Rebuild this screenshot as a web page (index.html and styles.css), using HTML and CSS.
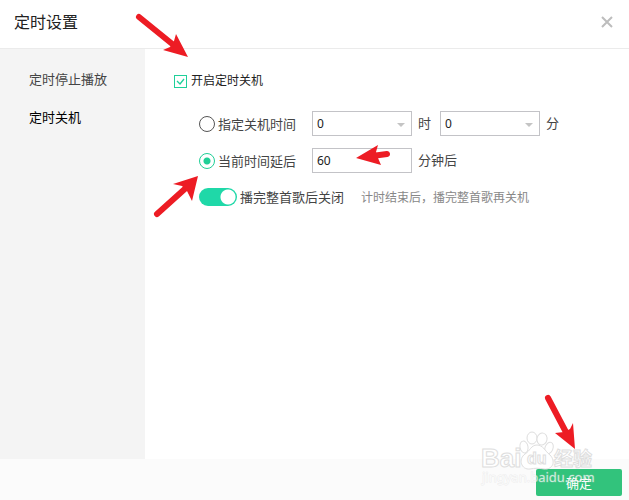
FILE: index.html
```html
<!DOCTYPE html>
<html lang="zh-CN">
<head>
<meta charset="utf-8">
<title>定时设置</title>
<link rel="stylesheet" href="styles.css">
</head>
<body>
<div class="dialog">
  <header class="header">
    <h1 class="title">定时设置</h1>
    <button class="close" type="button" aria-label="关闭">
      <svg width="14" height="14" viewBox="0 0 14 14"><path d="M2 2L12 12M12 2L2 12" stroke="#bdbdbd" stroke-width="2"/></svg>
    </button>
  </header>
  <div class="body">
    <nav class="sidebar">
      <a class="nav-link" href="#stop">定时停止播放</a>
      <a class="nav-link active" href="#shutdown">定时关机</a>
    </nav>
    <main class="panel">
      <label class="enable"><input class="check" type="checkbox" checked>开启定时关机</label>
      <div class="options">
        <div class="row">
          <label class="choice"><input class="radio" type="radio" name="mode">指定关机时间</label>
          <select class="field select" id="hour"><option>0</option></select>
          <label class="unit" for="hour">时</label>
          <select class="field select next" id="minute"><option>0</option></select>
          <label class="unit" for="minute">分</label>
        </div>
        <div class="row">
          <label class="choice"><input class="radio" type="radio" name="mode" checked>当前时间延后</label>
          <input class="field" id="delay" type="text" value="60">
          <label class="unit" for="delay">分钟后</label>
        </div>
        <div class="row">
          <label class="toggle"><input class="switch" type="checkbox" role="switch" checked>播完整首歌后关闭</label>
          <span class="hint">计时结束后，播完整首歌再关机</span>
        </div>
      </div>
    </main>
  </div>
  <footer class="footer">
    <button class="confirm" type="button">确定</button>
    <svg class="watermark" width="120" height="60" viewBox="480 430 120 60" aria-hidden="true">
      <g class="mark">
        <text class="brand" x="481" y="467">Bai</text>
        <ellipse cx="524" cy="447" rx="4" ry="6" transform="rotate(-12 524 447)"/>
        <ellipse cx="532" cy="438" rx="5" ry="6"/>
        <ellipse cx="542" cy="439" rx="5" ry="6" transform="rotate(12 542 439)"/>
        <ellipse cx="549" cy="448" rx="4" ry="6" transform="rotate(20 549 448)"/>
        <path d="M537 445C531 445 530 451 525 454C518 459 521 470 530 469C535 468 539 468 544 469C553 470 556 461 550 455C545 451 543 445 537 445Z"/>
        <text class="du" x="527" y="464">du</text>
        <text class="brand-cjk" x="554" y="466">经验</text>
      </g>
      <text class="url" x="482" y="482">jingyan.baidu.com</text>
    </svg>
    <svg class="arrow-confirm" width="36" height="56" viewBox="542 393 36 56" aria-hidden="true">
      <path class="shaft" d="M548 398L568 436"/><path class="head" d="M575 449L555 433L564 432L570 429L573 423Z"/>
    </svg>
  </footer>
  <svg class="arrows" width="300" height="220" viewBox="130 0 300 220" aria-hidden="true">
    <path class="shaft" d="M139 17L176 47"/><path class="head" d="M188 57L163 50L170 47L174 41L176 34Z"/>
    <path class="shaft" d="M157 214L187 187"/><path class="head" d="M198 176L173 184L182 186L187 191L192 201Z"/>
    <path class="shaft" d="M387 154L372 156"/><path class="head" d="M356 158L378 145L376 152L378 158L381 165Z"/>
  </svg>
</div>
</body>
</html>
```
FILE: styles.css
```css
* { box-sizing: border-box; }

body {
  margin: 0;
  font-family: "Noto Sans", "Noto Sans CJK SC", sans-serif;
  font-size: 13px;
  line-height: 20px;
  color: #444;
}

button, input, select { font: inherit; margin: 0; }

.dialog {
  position: relative;
  display: flex;
  flex-direction: column;
  min-height: 100vh;
  background: #fff;
}

.header {
  display: flex;
  align-items: flex-start;
  justify-content: space-between;
  padding: 10px 15px 14px 14px;
  border-bottom: 1px solid #ebebeb;
}

.title {
  margin: 0;
  font-size: 16px;
  line-height: 24px;
  font-weight: 400;
  color: #222;
}

.close {
  display: flex;
  align-items: center;
  height: 24px;
  padding: 0;
  border: 0;
  background: none;
}

.body { display: flex; flex: 1; }

.sidebar {
  display: flex;
  flex-direction: column;
  gap: 18px;
  width: 145px;
  padding: 20px 29px;
  background: #f4f4f4;
}

.nav-link { color: #444; text-decoration: none; white-space: nowrap; }
.nav-link.active { color: #000; }

.panel { flex: 1; padding: 22px 29px; }

.enable {
  display: flex;
  align-items: center;
  gap: 4px;
  font-size: 12px;
  color: #222;
}

.check {
  appearance: none;
  width: 13px;
  height: 13px;
  border: 1px solid #1fd09a;
  background: url("data:image/svg+xml,%3Csvg xmlns='http://www.w3.org/2000/svg' viewBox='0 0 11 11'%3E%3Cpath d='M2 5L5 8L9 3' fill='none' stroke='%231fd09a' stroke-width='1.3'/%3E%3C/svg%3E");
}

.options {
  display: flex;
  flex-direction: column;
  gap: 12px;
  margin-top: 20px;
  padding-left: 25px;
}

.row { display: flex; align-items: center; white-space: nowrap; }

.choice { display: flex; align-items: center; gap: 3px; width: 113px; }

.radio {
  appearance: none;
  width: 16px;
  height: 16px;
  border: 1px solid #555;
  border-radius: 50%;
}

.radio:checked {
  border-color: #1fcf96;
  background: radial-gradient(circle, #1fcf96 3px, transparent 4px);
}

.field {
  appearance: none;
  width: 100px;
  height: 25px;
  padding: 0 4px;
  border: 1px solid #c3c3c7;
  border-radius: 0;
  background: #fff;
  color: #222;
  font-size: 12px;
}

.select {
  background: #fff url("data:image/svg+xml,%3Csvg xmlns='http://www.w3.org/2000/svg' width='8' height='4'%3E%3Cpath d='M0 0H8L4 4Z' fill='%23c4c4c4'/%3E%3C/svg%3E") no-repeat right 6px top 11px;
}

.unit { margin-left: 6px; padding-bottom: 2px; }
.next { margin-left: 9px; }

.toggle { display: flex; align-items: center; gap: 3px; height: 24px; }

.switch {
  appearance: none;
  width: 38px;
  height: 18px;
  border-radius: 9px;
  background: radial-gradient(circle at 29px 9px, #fff 7px, #1fd8a8 8px);
}

.hint { margin-left: 17px; padding-top: 2px; font-size: 12px; color: #888; }

.footer {
  position: relative;
  display: flex;
  justify-content: flex-end;
  padding: 10px 7px 4px;
  background: #fbfbfb;
}

.confirm {
  width: 86px;
  height: 27px;
  padding: 0;
  border: 0;
  border-radius: 2px;
  background: #32c37c;
  color: #fff;
}

.watermark,
.arrow-confirm,
.arrows { position: absolute; pointer-events: none; }
.watermark { right: 29px; bottom: 10px; }
.arrow-confirm { right: 51px; bottom: 51px; }
.arrows { left: 130px; top: 0; }

.shaft { fill: none; stroke: #ed1c24; stroke-width: 6px; stroke-linecap: round; }
.head { fill: #ed1c24; }

.mark { fill: #fff; stroke: #dedede; stroke-width: 1px; }
.brand { font: bold 26px "Liberation Sans", sans-serif; }
.du { font: bold 16px "Liberation Sans", sans-serif; }
.brand-cjk { font: bold 19px "Noto Sans CJK SC", sans-serif; }
.url {
  font: 13px "Noto Sans", sans-serif;
  fill: #fff;
  fill-opacity: 0.7;
  stroke: #ccc;
  stroke-opacity: 0.3;
  stroke-width: 1px;
  paint-order: stroke;
}
```
